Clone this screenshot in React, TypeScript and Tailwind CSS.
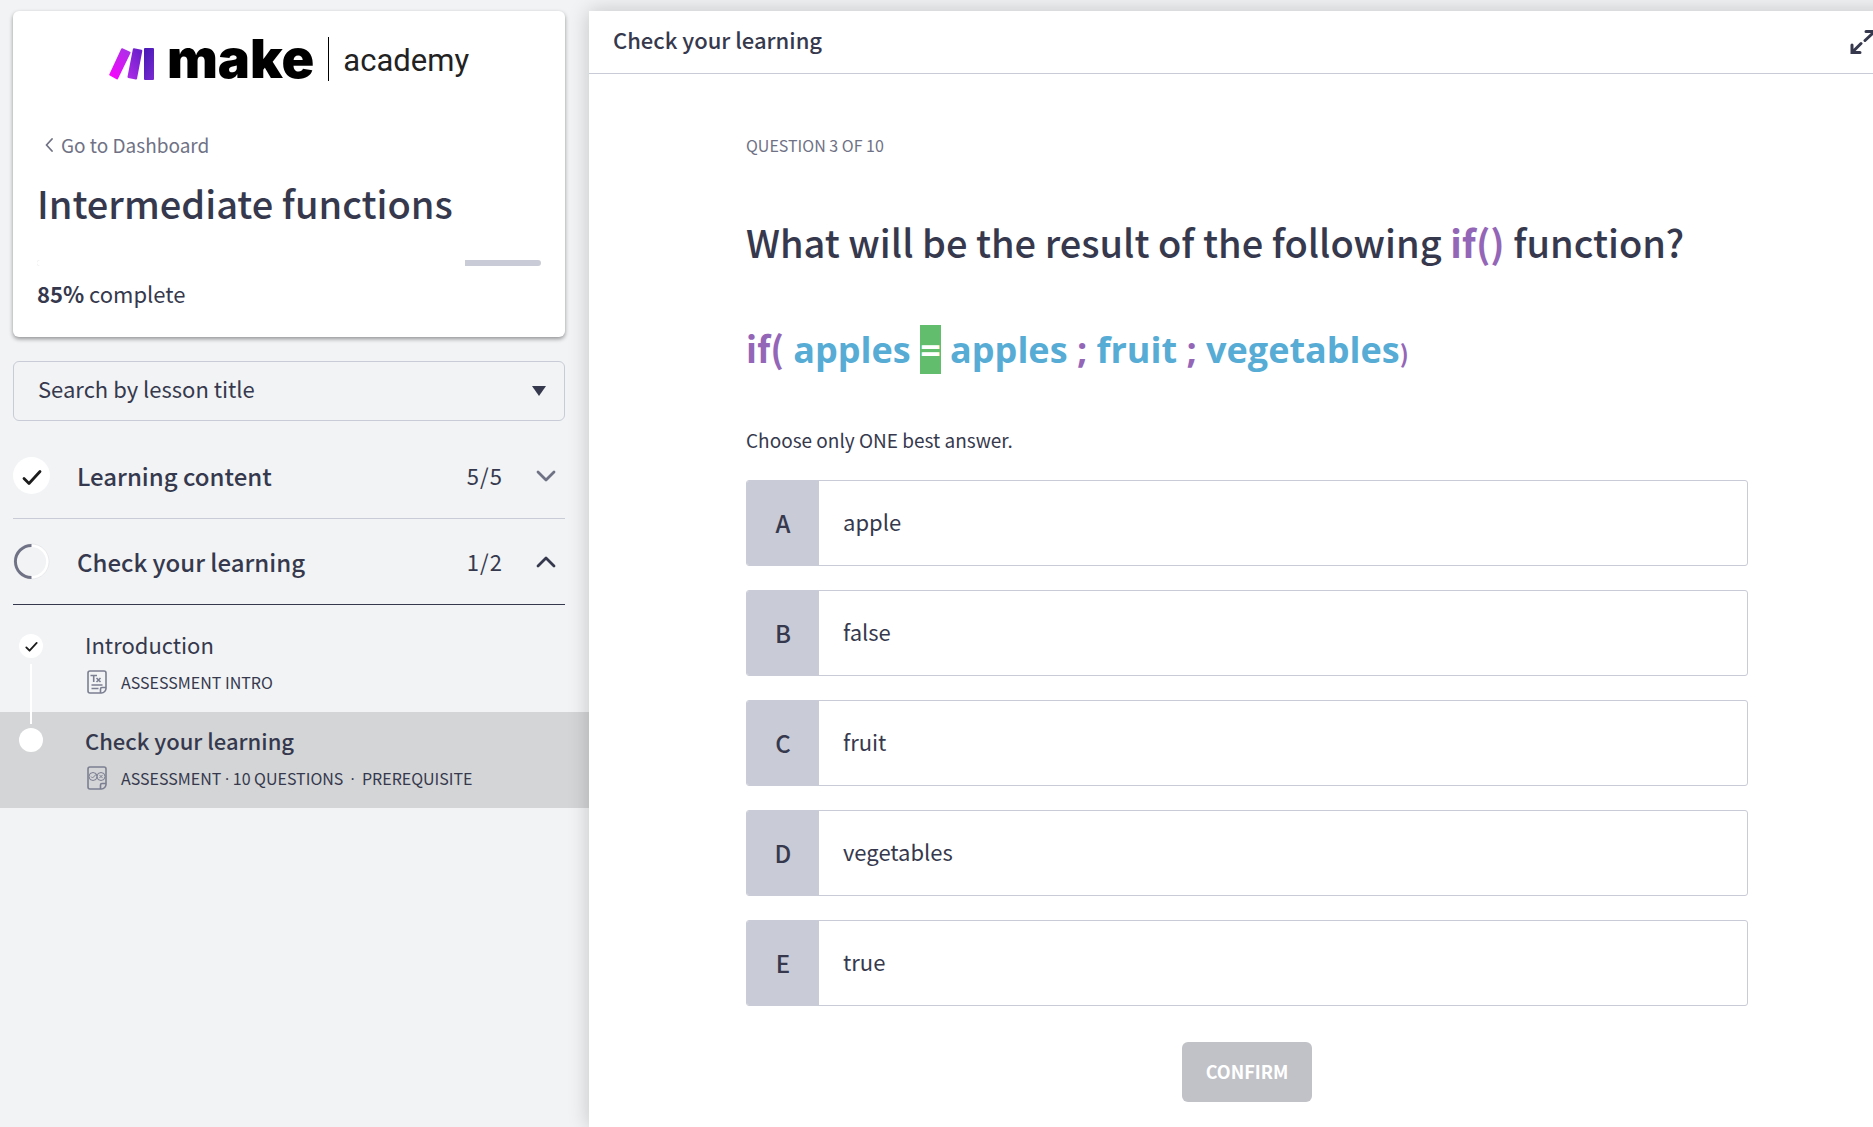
import { useState } from "react";

const options = [
  { letter: "A", text: "apple" },
  { letter: "B", text: "false" },
  { letter: "C", text: "fruit" },
  { letter: "D", text: "vegetables" },
  { letter: "E", text: "true" },
];

function Logo() {
  return (
    <div className="flex h-12 items-center justify-center">
      <svg width="46" height="34" viewBox="0 0 46 34" className="mt-2.5 shrink-0" aria-hidden="true">
        <defs>
          <linearGradient id="m1" x1="0" y1="1" x2="0.6" y2="0">
            <stop offset="0" stopColor="#ff00ff" />
            <stop offset="1" stopColor="#b02de9" />
          </linearGradient>
          <linearGradient id="m2" x1="0" y1="1" x2="0.6" y2="0">
            <stop offset="0" stopColor="#b02de9" />
            <stop offset="1" stopColor="#6d20cc" />
          </linearGradient>
          <linearGradient id="m3" x1="1" y1="1" x2="0.4" y2="0">
            <stop offset="0" stopColor="#7a2ad0" />
            <stop offset="1" stopColor="#4c1bb8" />
          </linearGradient>
        </defs>
        <path d="M13.4 1.2 21 4.8a1 1 0 0 1 .4 1.4L9 31.8a1 1 0 0 1-1.4.5L.8 28.6a1 1 0 0 1-.4-1.4L12.2 1.7a1 1 0 0 1 1.2-.5Z" fill="url(#m1)" />
        <path d="m25 1.2 7.6 1.6a1 1 0 0 1 .7 1.2L28 31.8a1 1 0 0 1-1.2.7l-7.5-1.6a1 1 0 0 1-.8-1.2L23.900 1.900A1 1 0 0 1 25 1.200Z" fill="url(#m2)" />
        <rect x="35" y="1" width="10" height="32" rx="1" fill="url(#m3)" />
      </svg>
      <span className="ml-3 font-[Inter] text-[54px] leading-[48px] font-black text-black">make</span>
      <span className="ml-3.5 h-11 w-px bg-black" />
      <span className="ml-3.5 pt-1 font-[Roboto] text-[31px] leading-[44px] text-[#222]">academy</span>
    </div>
  );
}

function Check({ size }: { size: number }) {
  return (
    <svg width={size} height={size} viewBox="0 0 20 20" fill="none" stroke="#1c1c1c" strokeWidth="2.8" strokeLinecap="round" strokeLinejoin="round" aria-hidden="true">
      <path d="m2 11.500 5 5L18 4.500" />
    </svg>
  );
}

function Chevron({ up }: { up?: boolean }) {
  return (
    <svg width="20" height="12" viewBox="0 0 20 12" fill="none" stroke={up ? "#36394d" : "#6f7285"} strokeWidth="2.800" strokeLinecap="round" strokeLinejoin="round" aria-hidden="true">
      <path d={up ? "m2 10 8-8 8 8" : "m2 2 8 8 8-8"} />
    </svg>
  );
}

function DocIcon({ quiz }: { quiz?: boolean }) {
  return (
    <svg width="20" height="24" viewBox="0 0 20 24" fill="none" stroke="#7c7f91" strokeWidth="1.600" strokeLinejoin="round" aria-hidden="true">
      <path d="M3 1h14a2 2 0 0 1 2 2v15.500c0 2-2 4.500-4.500 4.500H3a2 2 0 0 1-2-2V3a2 2 0 0 1 2-2Z" />
      <path d="M19 17.500h-4a1.500 1.500 0 0 0-1.500 1.500v4" />
      {quiz ? (
        <g strokeWidth="1">
          <circle cx="6" cy="10.500" r="4" />
          <circle cx="14" cy="10.500" r="4" />
          <path d="m4 10.500 1.500 1.500 4-4M12.400 8.900l3.200 3.200M15.600 8.900l-3.200 3.200" />
        </g>
      ) : (
        <path d="M3.500 5.500h6.500M6.700 5.500v6.500M9.500 8l4 4M13.500 8l-4 4M4.500 15h11M4.500 18.500h7" />
      )}
    </svg>
  );
}

function Dot() {
  return <span className="font-['Open_Sans',sans-serif] leading-none">·</span>;
}

function Section({ title, count, open }: { title: string; count: string; open?: boolean }) {
  return (
    <button
      type="button"
      aria-expanded={!!open}
      className={`flex h-[86px] w-full items-center border-b text-left ${open ? "border-[#36394d]" : "border-[#c9cbd6]"}`}
    >
      {open ? (
        <svg width="37" height="37" viewBox="0 0 38 38" fill="none" aria-hidden="true">
          <circle cx="19" cy="19" r="16.500" stroke="#fff" strokeWidth="3" />
          <circle cx="19" cy="19" r="18" stroke="#d9dade" strokeWidth=".5" />
          <path d="M19 35.500a16.500 16.500 0 0 1 0-33" stroke="#6f7285" strokeWidth="3" />
        </svg>
      ) : (
        <span className="flex size-[37px] items-center justify-center rounded-full bg-white pt-0.5">
          <Check size={20} />
        </span>
      )}
      <span className="flex-1 pl-[27px] text-2xl font-medium">{title}</span>
      <span className="pr-[33px] text-[22px] tracking-wider">{count}</span>
      <span className="pr-[9px]">
        <Chevron up={open} />
      </span>
    </button>
  );
}

export default function App() {
  const [choice, setChoice] = useState("");
  return (
    <div className="flex min-h-screen overflow-hidden bg-[#f1f3f5] font-['Noto_Sans_CJK_SC',sans-serif] text-[#36394d]">
      <aside className="w-[589px] shrink-0 pt-[11px]">
        <div className="pr-6 pl-[13px]">
          <div className="rounded-md bg-white px-6 pt-6 pb-7 shadow-[0_2px_4px_rgba(0,0,0,0.4)]">
            <Logo />
            <a href="#dashboard" className="mt-12 flex items-center gap-2 pl-2 text-[19px] leading-7 text-[#6f7285]">
              <svg width="8" height="14" viewBox="0 0 8 14" fill="none" stroke="currentColor" strokeWidth="1.800" strokeLinecap="round" strokeLinejoin="round" aria-hidden="true">
                <path d="M7 1 1.500 7 7 13" />
              </svg>
              Go to Dashboard
            </a>
            <h1 className="mt-[22px] text-[38px] leading-[44px] font-medium">Intermediate functions</h1>
            <div role="progressbar" aria-label="Course progress" aria-valuenow={85} className="mt-[35px] flex h-1.5 overflow-hidden rounded-full bg-[#c9cbd6]">
              <div className="w-[85%] bg-white" />
            </div>
            <p className="mt-[11px] text-[22px] leading-8">
              <span className="font-bold">85%</span> complete
            </p>
          </div>
          <div className="relative mt-6">
            <select aria-label="Search by lesson title" className="h-[60px] w-full appearance-none rounded-md border border-[#c9cbd6] bg-transparent px-6 pb-1.5 text-[22px]">
              <option>Search by lesson title</option>
            </select>
            <svg width="14" height="10" viewBox="0 0 14 10" className="pointer-events-none absolute top-[25px] right-[19px]" aria-hidden="true">
              <path d="M0 0h14L7 10Z" fill="#36394d" />
            </svg>
          </div>
          <div className="mt-3">
            <Section title="Learning content" count="5/5" />
            <Section title="Check your learning" count="1/2" open />
          </div>
        </div>
        <nav aria-label="Lessons" className="mt-[11px]">
          <a href="#intro" className="flex h-24 pt-3">
            <span className="flex w-[85px] shrink-0 flex-col items-start pt-1.5 pl-[19px]">
              <span className="flex size-6 shrink-0 items-center justify-center rounded-full bg-white">
                <Check size={13} />
              </span>
              <span className="relative mt-1.5 ml-[11px] h-[60px] w-0.5 shrink-0 bg-white" />
            </span>
            <span>
              <span className="block text-[22px] leading-8">Introduction</span>
              <span className="mt-2.5 flex h-6 items-center gap-3.5 pl-0.5 text-base">
                <DocIcon />
                ASSESSMENT INTRO
              </span>
            </span>
          </a>
          <a href="#check" className="flex h-24 bg-black/12 pt-3">
            <span className="w-[85px] shrink-0 pt-1 pl-[19px]">
              <span className="block size-6 rounded-full bg-white" />
            </span>
            <span>
              <span className="block text-[22px] leading-8 font-medium">Check your learning</span>
              <span className="mt-2.5 flex h-6 items-center gap-3.5 pl-0.5 text-base">
                <DocIcon quiz />
                <span>
                  ASSESSMENT <Dot /> 10 QUESTIONS&nbsp; <Dot />&nbsp; PREREQUISITE
                </span>
              </span>
            </span>
          </a>
        </nav>
      </aside>

      <main className="relative mt-[11px] -mr-8 min-w-0 flex-1 bg-white shadow-[0_0_20px_rgba(0,0,0,0.2)]">
        <header className="flex h-[63px] items-center justify-between border-b border-[#c9cbd6] pr-7 pl-6">
          <h2 className="pb-1.5 text-[22px] font-medium">Check your learning</h2>
          <button type="button" aria-label="Expand">
            <svg width="27" height="26" viewBox="0 0 27 26" fill="none" stroke="#36394d" strokeWidth="3" strokeLinecap="round" aria-hidden="true">
              <path d="M16 2.500h8.500v8.500M23.500 3.500 15 11.500M10 23.500H2V16M3 22.500 11 14.500" />
            </svg>
          </button>
        </header>
        <div className="mx-auto max-w-[1002px] pt-[59px]">
          <p className="text-base leading-6 text-[#6f7285]">QUESTION 3 OF 10</p>
          <h1 className="mt-[61px] text-[38px] leading-[48px] font-medium">
            What will be the result of the following <span className="font-bold text-[#9466b8]">if()</span> function?
          </h1>
          <p className="mt-14 font-['Open_Sans',sans-serif] text-4xl leading-[56px] font-bold text-[#56acd5]">
            <span className="font-['Noto_Sans_CJK_SC',sans-serif] leading-none text-[#9466b8]">if(</span> apples{" "}
            <span className="bg-[#62bd6c] text-white">=</span> apples <span className="text-[#9466b8]">;</span> fruit{" "}
            <span className="text-[#9466b8]">;</span> vegetables
            <span className="font-['Noto_Sans_CJK_SC',sans-serif] text-2xl leading-none text-[#9466b8]">)</span>
          </p>
          <fieldset className="mt-12">
            <legend className="text-[19px] leading-7">Choose only ONE best answer.</legend>
            <div className="mt-[26px] flex flex-col gap-6">
              {options.map((o) => (
                <label key={o.letter} className="relative flex h-[86px] cursor-pointer items-stretch overflow-hidden rounded-[3px] border border-[#c9cbd6]">
                  <input type="radio" name="answer" className="sr-only" checked={choice === o.letter} onChange={() => setChoice(o.letter)} />
                  <span className="flex w-[72px] items-center justify-center bg-[#c9cbd6] text-2xl font-medium">{o.letter}</span>
                  <span className="flex items-center pb-1 pl-6 text-[22px]">{o.text}</span>
                </label>
              ))}
            </div>
          </fieldset>
          <div className="flex justify-center pt-9 pb-5">
            <button type="button" disabled={choice === ""} className="h-[60px] rounded-md bg-[#c1c2c8] px-6 pb-0.5 text-lg font-bold text-white">
              CONFIRM
            </button>
          </div>
        </div>
      </main>
    </div>
  );
}
